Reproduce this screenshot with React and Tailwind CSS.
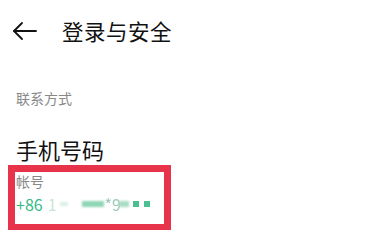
export default function App() {
  return (
    <div className="w-[365px] h-[230px] overflow-hidden bg-white relative" style={{ fontFamily: '"Noto Sans CJK SC", "Noto Sans", sans-serif' }}>
      <div className="absolute left-[8px] top-[165px] w-[163px] h-[66px] border-[7px] border-[#e8344a]" />
      <div className="relative flex items-center h-[62px] pl-[12px]">
        <svg width="26" height="20" viewBox="0 0 26 20" fill="none" stroke="#111" strokeWidth="1.8" strokeLinecap="round" strokeLinejoin="round">
          <path d="M2 10 H24" />
          <path d="M10 2 L2 10 L10 18" />
        </svg>
        <div className="ml-[24px] text-[21.5px] leading-none text-[#111] tracking-[0.5px]">登录与安全</div>
      </div>
      <div className="relative pl-[16px] mt-[29px] text-[14px] leading-none text-[#888]">联系方式</div>
      <div className="relative pl-[16px] mt-[33px] text-[22px] leading-none text-[#111]">手机号码</div>
      <div className="relative pl-[16px] mt-[14px] text-[14px] leading-none text-[#888]">帐号</div>
      <div className="relative pl-[16px] mt-[8px] flex items-center text-[16px] leading-none text-[#35b985]">
        <span>+86</span>
        <span className="ml-[5px] text-[#c6e6d6] blur-[0.6px]">1</span>
        <span className="ml-[3px] w-[8px] h-[4px] bg-[#d9efe4] blur-[1px]" />
        <span className="ml-[14px] w-[22px] h-[6px] bg-[#8fd6b5] blur-[1px]" />
        <span className="ml-[1px] text-[#9bc9b4] blur-[0.4px]">*9</span>
        <span className="ml-[-2px] w-[10px] h-[6px] bg-[#a9dcc5] blur-[1px]" />
        <span className="ml-[4px] w-[6px] h-[6px] bg-[#49c08f] blur-[0.6px]" />
        <span className="ml-[5px] w-[6px] h-[6px] bg-[#49c08f] blur-[0.6px]" />
      </div>
    </div>
  );
}
